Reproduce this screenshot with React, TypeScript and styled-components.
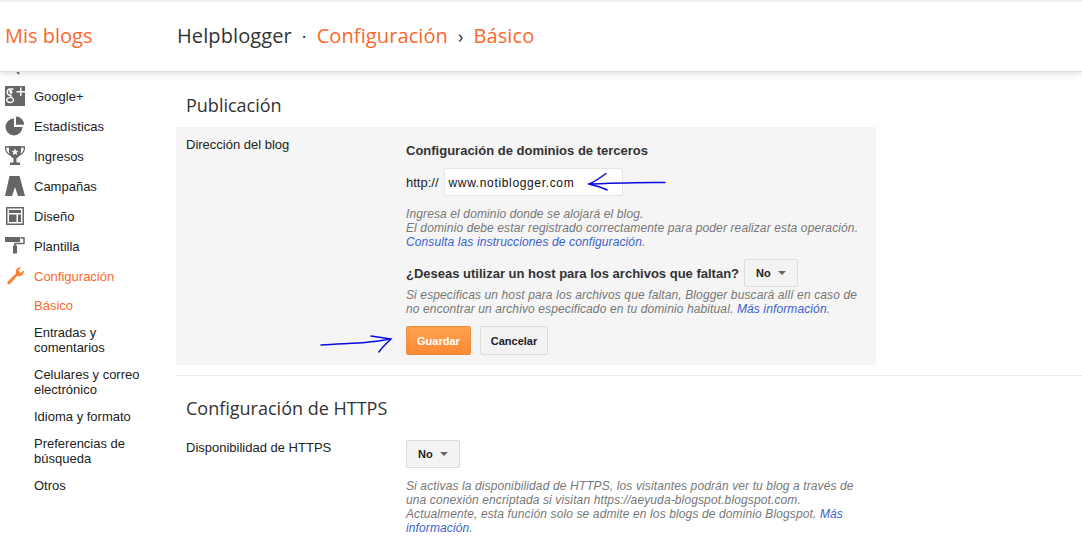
import React from "react";
import styled, { createGlobalStyle } from "styled-components";

const orange = "#f9682c";

const GlobalStyle = createGlobalStyle`
  html, body {
    margin: 0;
    padding: 0;
    background: #fff;
    overflow: hidden;
  }
  * {
    box-sizing: border-box;
  }
`;

const Page = styled.div`
  position: relative;
  width: 1082px;
  height: 550px;
  overflow: hidden;
  border-top: 2px solid #f1f1f1;
  font-family: "Liberation Sans", Arial, sans-serif;
  font-size: 13px;
  color: #222;
`;

const Header = styled.header`
  position: relative;
  z-index: 2;
  display: flex;
  align-items: center;
  height: 70px;
  padding-bottom: 2px;
  background: #fff;
  border-bottom: 1px solid #ddd;
  box-shadow: 0 2px 6px rgba(0, 0, 0, 0.12);
  font-family: "Open Sans", sans-serif;
  font-size: 20px;
  color: ${orange};
`;

const Brand = styled.div`
  width: 177px;
  padding-left: 5px;
`;

const Crumbs = styled.div`
  display: flex;
  align-items: center;
  letter-spacing: 0.1px;
`;

const BlogName = styled.span`
  color: #333;
`;

const Sep = styled.span`
  margin: 0 10px;
  color: #333;
  font-size: 18px;
`;

const Body = styled.div`
  display: flex;
  height: 478px;
`;

const Sidebar = styled.nav`
  width: 176px;
  flex: none;
  overflow: hidden;
`;

const ClippedIcon = styled.svg`
  display: block;
  width: 20px;
  height: 9px;
  margin-left: 7px;
`;

const NavRow = styled.div<{ $active?: boolean }>`
  display: flex;
  align-items: center;
  height: 30px;
  padding-left: 5px;
  color: ${({ $active }) => ($active ? orange : "#222")};
`;

const NavIcon = styled.span<{ $active?: boolean }>`
  display: flex;
  align-items: center;
  justify-content: center;
  width: 20px;
  height: 20px;
  margin-right: 9px;
  color: ${({ $active }) => ($active ? "#fb8133" : "#666")};
`;

const SubList = styled.div`
  padding-left: 34px;
`;

const SubItem = styled.div<{ $active?: boolean; $gap: number }>`
  margin-top: ${({ $gap }) => $gap}px;
  line-height: 15px;
  color: ${({ $active }) => ($active ? orange : "#222")};
`;

const Main = styled.main`
  flex: 1;
  min-width: 0;
`;

const SectionTitle = styled.h2`
  margin: 0;
  padding-left: 10px;
  font-family: "Open Sans", sans-serif;
  font-size: 18px;
  font-weight: 400;
  line-height: 24px;
  color: #333;
`;

const Publication = styled.section`
  padding-top: 21px;
  border-bottom: 1px solid #ebebeb;
  padding-bottom: 10px;
`;

const Panel = styled.div`
  display: flex;
  width: 700px;
  height: 238px;
  margin-top: 10px;
  background: #f5f5f5;
`;

const Label = styled.div<{ $top: number }>`
  width: 230px;
  flex: none;
  padding: ${({ $top }) => $top}px 0 0 10px;
  line-height: 15px;
`;

const PanelContent = styled.div`
  padding-top: 16px;
`;

const BoldLine = styled.div`
  font-size: 13px;
  font-weight: 700;
  line-height: 15px;
  color: #333;
`;

const UrlRow = styled.div`
  display: flex;
  align-items: center;
  gap: 5px;
  margin-top: 10px;
  font-size: 13px;
`;

const UrlInput = styled.div`
  width: 179px;
  height: 28px;
  padding-left: 4px;
  background: #fff;
  border: 1px solid #e6e6e6;
  border-radius: 2px;
  font-size: 12px;
  letter-spacing: 0.65px;
  line-height: 28px;
  color: #111;
`;

const Hint = styled.p<{ $top: number }>`
  width: 455px;
  margin: ${({ $top }) => $top}px 0 0;
  font-size: 12px;
  font-style: italic;
  letter-spacing: 0.12px;
  line-height: 14px;
  color: #777;
`;

const HintLink = styled.span`
  color: #3a62cc;
`;

const QuestionRow = styled.div`
  display: flex;
  align-items: center;
  gap: 5px;
  margin-top: 10px;
`;

const Select = styled.div`
  display: flex;
  align-items: center;
  justify-content: space-between;
  width: 54px;
  height: 28px;
  padding: 0 11px;
  background: #f3f3f3;
  border: 1px solid #dcdcdc;
  border-radius: 2px;
  font-size: 11px;
  font-weight: 700;
  color: #222;
`;

const Caret = styled.span`
  width: 0;
  height: 0;
  border-left: 4px solid transparent;
  border-right: 4px solid transparent;
  border-top: 4px solid #666;
`;

const Buttons = styled.div`
  display: flex;
  gap: 9px;
  margin-top: 10px;
`;

const Button = styled.div<{ $primary?: boolean }>`
  display: flex;
  align-items: center;
  justify-content: center;
  height: 29px;
  padding: 0 10px;
  border-radius: 2px;
  font-size: 11px;
  font-weight: 700;
  border: 1px solid ${({ $primary }) => ($primary ? "#f08a3c" : "#dcdcdc")};
  color: ${({ $primary }) => ($primary ? "#fff" : "#222")};
  background: ${({ $primary }) =>
    $primary ? "linear-gradient(#ffa24f, #fd8a34)" : "#f3f3f3"};
`;

const Https = styled.section`
  padding-top: 20px;
`;

const HttpsRow = styled.div`
  display: flex;
  margin-top: 20px;
`;

const Scribble = styled.svg`
  position: absolute;
  top: -2px;
  left: 0;
  z-index: 3;
  pointer-events: none;
`;

const App: React.FC = () => {
  return (
    <Page>
      <GlobalStyle />
      <Header>
        <Brand>Mis blogs</Brand>
        <Crumbs>
          <BlogName>Helpblogger</BlogName>
          <Sep>·</Sep>
          <span>Configuración</span>
          <Sep>›</Sep>
          <span>Básico</span>
        </Crumbs>
      </Header>
      <Body>
        <Sidebar>
          <ClippedIcon viewBox="0 0 20 9">
            <path d="M10-1l2 3" stroke="#666" strokeWidth="2" />
          </ClippedIcon>
          <NavRow>
            <NavIcon>
              <svg width="20" height="20" viewBox="0 0 20 20">
                <path d="M0 0h20v20H0z" fill="#666" />
                <path d="M8.500 3H5.500C3.500 3 2.200 4.500 2.200 6.200c0 1.800 1.400 3 3.100 3h1.200M5.800 9.200c-.6.800-.4 1.300.3 1.900l1.400 1.200c1.600 1.300 1.300 4.200-2 4.200-2.200 0-3.800-.9-3.800-2.400 0-1.500 1.500-2.500 3.600-2.500"
                  fill="none" stroke="#fff" strokeWidth="1.400" />
                <path d="M5 3.800c1.300-.4 2.500 1 2.500 2.500 0 1.300-1 2-2 1.500-1.300-.6-1.800-3.500-.5-4z" fill="#fff" />
                <path d="M15 1.500h1.500V5H20v1.500h-3.500V10H15V6.500h-3.500V5H15z" fill="#fff" />
              </svg>
            </NavIcon>
            Google+
          </NavRow>
          <NavRow>
            <NavIcon>
              <svg width="20" height="20" viewBox="0 0 20 20" fill="currentColor">
                <path d="M9 2.500A8.500 8.500 0 1 0 17.500 11H9z" />
                <path d="M11 .5A8 8 0 0 1 19 8.800h-8z" />
              </svg>
            </NavIcon>
            Estadísticas
          </NavRow>
          <NavRow>
            <NavIcon>
              <svg width="20" height="20" viewBox="0 0 20 20" fill="currentColor">
                <path d="M4 0h12v5c0 4-2 6.500-4.500 7.200V16.500H15V19H5v-2.500h3.500v-4.300C6 11.500 4 9 4 5z" />
                <path d="M4 1H.5c0 4 2 7 5 8M16 1h3.500c0 4-2 7-5 8" fill="none" stroke="currentColor" strokeWidth="1.300" />
                <path d="M10 2.500l1 2.300 2.400.2-1.800 1.600.6 2.400L10 7.700 7.800 9l.6-2.400L6.600 5 9 4.800z" fill="#fff" />
              </svg>
            </NavIcon>
            Ingresos
          </NavRow>
          <NavRow>
            <NavIcon>
              <svg width="20" height="20" viewBox="0 0 20 20" fill="currentColor">
                <path d="M4.500 0h10L20 20h-7l-3-9-3 9H0z" />
              </svg>
            </NavIcon>
            Campañas
          </NavRow>
          <NavRow>
            <NavIcon>
              <svg width="18" height="18" viewBox="0 0 18 18" fill="currentColor">
                <path d="M0 0h18v18H0zM1.500 1.500v15h15v-15z" fillRule="evenodd" />
                <path d="M3 3h12v3H3zM3 7.500h7.500V15H3zM12 7.500h3V15h-3z" />
              </svg>
            </NavIcon>
            Diseño
          </NavRow>
          <NavRow>
            <NavIcon>
              <svg width="20" height="20" viewBox="0 0 20 20" fill="currentColor">
                <path d="M0 1h15v5H0z" />
                <path d="M15.500 2H19v5.500h-9V10" fill="none" stroke="currentColor" strokeWidth="1.500" />
                <path d="M8 9.500h4v8H8z" />
              </svg>
            </NavIcon>
            Plantilla
          </NavRow>
          <NavRow $active>
            <NavIcon $active>
              <svg width="20" height="20" viewBox="0 0 20 20" fill="currentColor">
                <path d="M11 7.500C10 4.500 12 1.500 16 1l-2.500 3.500L15.500 7 19 4.500c.2 4-3.300 6.700-7 5.500L5 18c-1.300 1.300-3.700-.7-2.500-2.200z" />
              </svg>
            </NavIcon>
            Configuración
          </NavRow>
          <SubList>
            <SubItem $active $gap={7}>Básico</SubItem>
            <SubItem $gap={12}>Entradas y<br />comentarios</SubItem>
            <SubItem $gap={12}>Celulares y correo<br />electrónico</SubItem>
            <SubItem $gap={12}>Idioma y formato</SubItem>
            <SubItem $gap={12}>Preferencias de<br />búsqueda</SubItem>
            <SubItem $gap={12}>Otros</SubItem>
          </SubList>
        </Sidebar>
        <Main>
          <Publication>
            <SectionTitle>Publicación</SectionTitle>
            <Panel>
              <Label $top={10}>Dirección del blog</Label>
              <PanelContent>
                <BoldLine>Configuración de dominios de terceros</BoldLine>
                <UrlRow>
                  http://
                  <UrlInput>www.notiblogger.com</UrlInput>
                </UrlRow>
                <Hint $top={11}>
                  Ingresa el dominio donde se alojará el blog.
                  <br />
                  El dominio debe estar registrado correctamente para poder realizar esta operación.
                  <br />
                  <HintLink>Consulta las instrucciones de configuración</HintLink>.
                </Hint>
                <QuestionRow>
                  <BoldLine>¿Deseas utilizar un host para los archivos que faltan?</BoldLine>
                  <Select>
                    No
                    <Caret />
                  </Select>
                </QuestionRow>
                <Hint $top={1}>
                  Si especificas un host para los archivos que faltan, Blogger buscará allí en caso de
                  no encontrar un archivo especificado en tu dominio habitual.{" "}
                  <HintLink>Más información</HintLink>.
                </Hint>
                <Buttons>
                  <Button $primary>Guardar</Button>
                  <Button>Cancelar</Button>
                </Buttons>
              </PanelContent>
            </Panel>
          </Publication>
          <Https>
            <SectionTitle>Configuración de HTTPS</SectionTitle>
            <HttpsRow>
              <Label $top={0}>Disponibilidad de HTTPS</Label>
              <div>
                <Select>
                  No
                  <Caret />
                </Select>
                <Hint $top={11}>
                  Si activas la disponibilidad de HTTPS, los visitantes podrán ver tu blog a través de
                  una conexión encriptada si visitan https://aeyuda-blogspot.blogspot.com.
                  Actualmente, esta función solo se admite en los blogs de dominio Blogspot.{" "}
                  <HintLink>Más información</HintLink>.
                </Hint>
              </div>
            </HttpsRow>
          </Https>
        </Main>
      </Body>
      <Scribble width="1082" height="550" fill="none" stroke="#0a0ae0" strokeWidth="1.500" strokeLinecap="round">
        <path d="M665 182.500C640 182 615 183 589 184M606 173.500C600 178 594 182 589 184C595 186 602 187 607 190" />
        <path d="M321 345C345 343 368 344 390 339M371 336C378 337 385 338 391 339C387 343 382 347 379 352" />
      </Scribble>
    </Page>
  );
};

export default App;
